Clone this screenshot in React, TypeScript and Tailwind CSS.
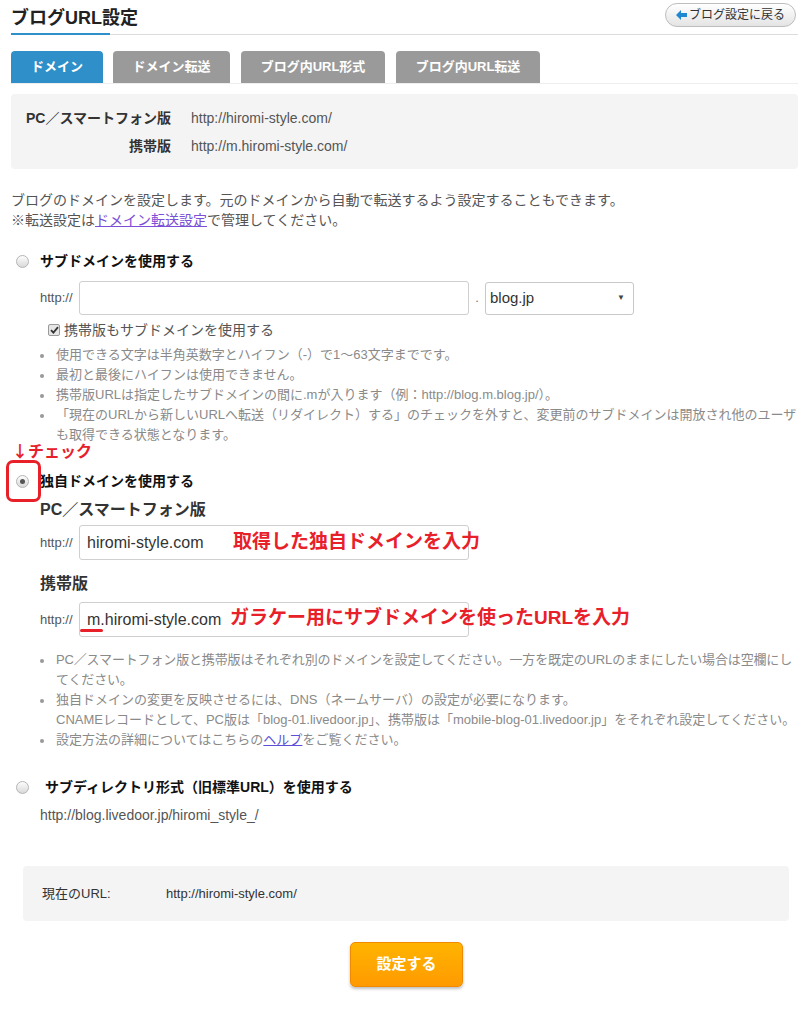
import React from 'react';

const font = { fontFamily: '"Liberation Sans", "Noto Sans CJK JP", sans-serif' };
const cjk = { fontFamily: '"Noto Sans CJK JP", sans-serif' };

const tabs = [
  { label: 'ドメイン', w: 'w-[92px] ml-0', active: true },
  { label: 'ドメイン転送', w: 'w-[117px] ml-[10px]', active: false },
  { label: 'ブログ内URL形式', w: 'w-[144px] ml-[11px]', active: false },
  { label: 'ブログ内URL転送', w: 'w-[144px] ml-[11px]', active: false },
];

function Radio({ checked = false }: { checked?: boolean }) {
  return (
    <span className="w-[13px] h-[13px] shrink-0 rounded-full border border-[#b5b5b5] bg-gradient-to-b from-[#fdfdfd] to-[#d9d9d9] flex items-center justify-center">
      {checked && <span className="w-[5px] h-[5px] rounded-full bg-[#555]" />}
    </span>
  );
}

function Bullet({ children, tight = false }: { children: React.ReactNode; tight?: boolean }) {
  return (
    <li className="flex">
      <span className="w-[16px] shrink-0 flex justify-start pt-[9px]">
        <span className="w-[4px] h-[4px] rounded-full bg-[#999]" />
      </span>
      <span className={tight ? 'whitespace-nowrap tracking-[-0.15px]' : 'whitespace-nowrap'}>{children}</span>
    </li>
  );
}

export default function App() {
  return (
    <div className="w-[798px] overflow-hidden bg-white text-[#333] pb-[30px]" style={font}>
      {/* header */}
      <div className="flex items-start justify-between pl-[11px] pr-[2px] h-[33px]">
        <h1 className="pt-[6px] text-[18px] leading-[24px] font-bold text-[#222]">ブログURL設定</h1>
        <button className="mt-[3px] h-[24px] px-[10px] rounded-full border border-[#bdbdbd] bg-gradient-to-b from-white to-[#e4e4e4] flex items-center gap-[2px] text-[12px] text-[#333]">
          <svg width="11" height="10" viewBox="0 0 11 10">
            <path d="M0 5 L5 0 L5 3 L11 3 L11 7 L5 7 L5 10 Z" fill="#1e88d0" />
          </svg>
          ブログ設定に戻る
        </button>
      </div>
      <div className="flex items-end ml-[11px]">
        <div className="w-[99px] h-[2px] bg-[#2e8fc9]" />
        <div className="flex-1 h-px bg-[#dcdcdc]" />
      </div>

      {/* tabs */}
      <div className="mt-[16px] ml-[11px] flex border-b border-[#eeeeee]">
        {tabs.map((t) => (
          <div
            key={t.label}
            className={`${t.w} h-[32px] rounded-t-[4px] flex items-center justify-center text-[13px] font-bold text-white ${
              t.active ? 'bg-[#2e8fc9]' : 'bg-[#9a9a9a]'
            }`}
          >
            {t.label}
          </div>
        ))}
      </div>

      {/* info box */}
      <div className="mt-[10px] ml-[11px] rounded-[4px] bg-[#f4f4f4] pt-[10px] pb-[9px] text-[14px]">
        <div className="flex leading-[28px]">
          <span className="w-[160px] text-right font-bold text-[#333]">PC／スマートフォン版</span>
          <span className="ml-[20px] text-[#555]">http://hiromi-style.com/</span>
        </div>
        <div className="flex leading-[28px]">
          <span className="w-[160px] text-right font-bold text-[#333]">携帯版</span>
          <span className="ml-[20px] text-[#555]">http://m.hiromi-style.com/</span>
        </div>
      </div>

      {/* description */}
      <div className="mt-[21px] pl-[11px] text-[14px] leading-[20px] text-[#555]">
        <p>ブログのドメインを設定します。元のドメインから自動で転送するよう設定することもできます。</p>
        <p>
          ※転送設定は<a className="text-[#7b4fd6] underline">ドメイン転送設定</a>で管理してください。
        </p>
      </div>

      {/* subdomain */}
      <div className="mt-[21px] pl-[16px] flex items-center h-[20px]">
        <Radio />
        <span className="ml-[11px] text-[14px] font-bold text-[#111]">サブドメインを使用する</span>
      </div>
      <div className="mt-[10px] pl-[40px] flex items-center">
        <span className="w-[39px] text-[13px] text-[#555]">http://</span>
        <div className="w-[390px] h-[34px] rounded-[3px] border border-[#cfcfcf] bg-white" />
        <span className="w-[16px] text-center text-[13px] text-[#777]">.</span>
        <div className="w-[149px] h-[33px] rounded-[3px] border border-[#c8c8c8] bg-white flex items-center justify-between pl-[4px] pr-[8px]">
          <span className="text-[15px] text-[#333]">blog.jp</span>
          <span className="text-[8px] text-[#444]">▼</span>
        </div>
      </div>
      <div className="mt-[5px] pl-[48px] flex items-center h-[20px]">
        <span className="w-[12px] h-[12px] rounded-[2px] border border-[#9a9a9a] bg-[#e6e6e6] flex items-center justify-center">
          <svg width="9" height="8" viewBox="0 0 9 8">
            <path d="M1 4.2 L3.4 6.6 L8 1.2" stroke="#333" strokeWidth="1.8" fill="none" />
          </svg>
        </span>
        <span className="ml-[4px] text-[14px] text-[#555]">携帯版もサブドメインを使用する</span>
      </div>
      <ul className="mt-[5px] pl-[40px] text-[13px] leading-[20px] text-[#8a8a8a]">
        <Bullet>使用できる文字は半角英数字とハイフン（-）で1～63文字までです。</Bullet>
        <Bullet>最初と最後にハイフンは使用できません。</Bullet>
        <Bullet>携帯版URLは指定したサブドメインの間に.mが入ります（例：http://blog.m.blog.jp/）。</Bullet>
        <Bullet>
          「現在のURLから新しいURLへ転送（リダイレクト）する」のチェックを外すと、変更前のサブドメインは開放され他のユーザ
          <br />
          も取得できる状態となります。
        </Bullet>
      </ul>

      {/* own domain */}
      <div className="mt-[-2px] pl-[12px] h-[15px] text-[16px] leading-[15px] font-bold text-[#e8202a]" style={cjk}>
        ↓チェック
      </div>
      <div className="relative mt-[13px] pl-[16px] flex items-center h-[20px]">
        <Radio checked />
        <span className="ml-[11px] text-[14px] font-bold text-[#111]">独自ドメインを使用する</span>
        <span className="absolute left-[6px] top-[-11px] w-[35px] h-[42px] rounded-[7px] border-[3px] border-[#e8202a]" />
      </div>
      <div className="mt-[7px] pl-[40px] text-[16px] leading-[24px] font-bold text-[#333]">PC／スマートフォン版</div>
      <div className="mt-[3px] pl-[40px] flex items-center">
        <span className="w-[39px] text-[13px] text-[#555]">http://</span>
        <div className="relative w-[390px] h-[35px] rounded-[3px] border border-[#cfcfcf] bg-white flex items-center pl-[7px]">
          <span className="text-[16px] text-[#333]">hiromi-style.com</span>
          <span className="absolute left-[153px] top-[5px] text-[19px] leading-[22px] font-bold text-[#e8202a] whitespace-nowrap">
            取得した独自ドメインを入力
          </span>
        </div>
      </div>
      <div className="mt-[12px] pl-[40px] text-[16px] leading-[24px] font-bold text-[#333]">携帯版</div>
      <div className="mt-[6px] pl-[40px] flex items-center">
        <span className="w-[39px] text-[13px] text-[#555]">http://</span>
        <div className="relative w-[390px] h-[35px] rounded-[3px] border border-[#cfcfcf] bg-white flex items-center pl-[7px]">
          <span className="text-[16px] text-[#333]">m.hiromi-style.com</span>
          <span className="absolute left-[0px] top-[26px] w-[23px] h-[3px] rounded-full bg-[#e8202a]" />
          <span className="absolute left-[150px] top-[4px] text-[19px] leading-[22px] font-bold text-[#e8202a] whitespace-nowrap">
            ガラケー用にサブドメインを使ったURLを入力
          </span>
        </div>
      </div>
      <ul className="mt-[13px] pl-[40px] text-[13px] leading-[20px] text-[#8a8a8a]">
        <Bullet tight>
          PC／スマートフォン版と携帯版はそれぞれ別のドメインを設定してください。一方を既定のURLのままにしたい場合は空欄にし
          <br />
          てください。
        </Bullet>
        <Bullet>
          独自ドメインの変更を反映させるには、DNS（ネームサーバ）の設定が必要になります。
          <br />
          CNAMEレコードとして、PC版は「blog-01.livedoor.jp」、携帯版は「mobile-blog-01.livedoor.jp」をそれぞれ設定してください。
        </Bullet>
        <Bullet>
          設定方法の詳細についてはこちらの<a className="text-[#5a4fd6] underline">ヘルプ</a>をご覧ください。
        </Bullet>
      </ul>

      {/* subdirectory */}
      <div className="mt-[27px] pl-[16px] flex items-center h-[20px]">
        <Radio />
        <span className="ml-[16px] text-[14px] font-bold text-[#111]">サブディレクトリ形式（旧標準URL）を使用する</span>
      </div>
      <div className="mt-[8px] pl-[40px] text-[14px] leading-[20px] text-[#555]">http://blog.livedoor.jp/hiromi_style_/</div>

      {/* current url */}
      <div className="mt-[41px] ml-[23px] mr-[9px] h-[55px] rounded-[4px] bg-[#f4f4f4] flex items-center px-[19px] text-[13px] text-[#333]">
        <span className="w-[124px]">現在のURL:</span>
        <span>http://hiromi-style.com/</span>
      </div>

      <div className="mt-[21px] flex justify-center pl-[15px]">
        <button className="w-[113px] h-[45px] rounded-[5px] border border-[#f08a00] bg-gradient-to-b from-[#ffb400] to-[#ff9a00] shadow-[0_2px_3px_rgba(0,0,0,0.25)] text-[15px] font-bold text-white">
          設定する
        </button>
      </div>
    </div>
  );
}
